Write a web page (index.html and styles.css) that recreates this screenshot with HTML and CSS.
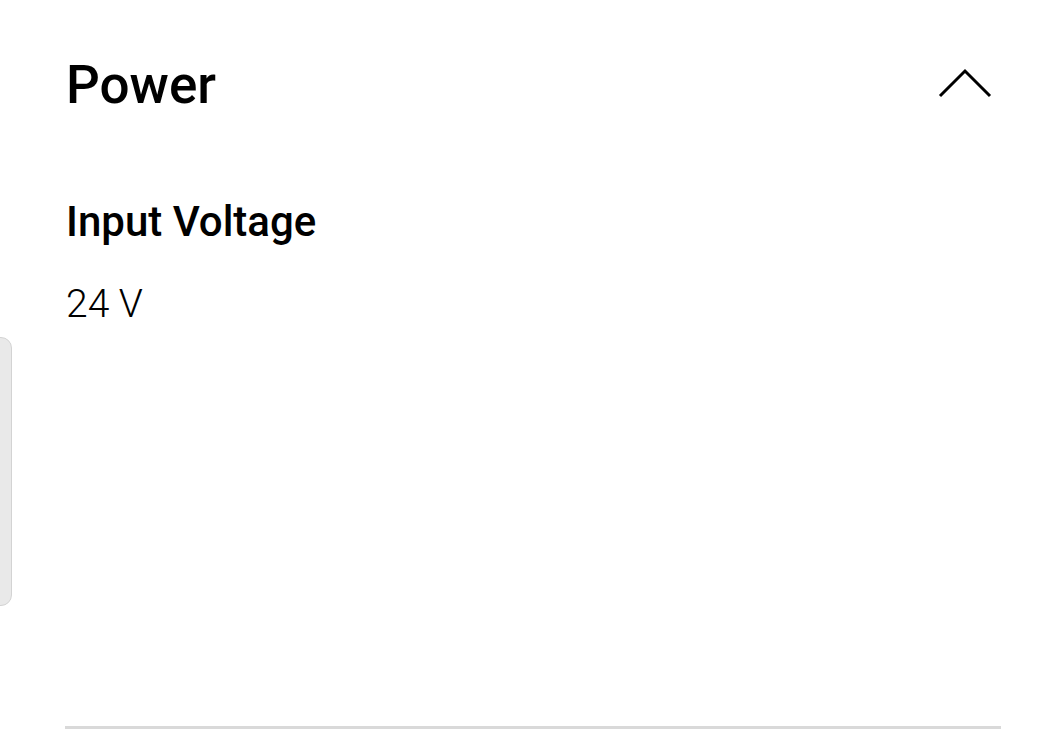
FILE: index.html
```html
<!DOCTYPE html>
<html>
<head>
<meta charset="utf-8">
<link rel="stylesheet" href="styles.css">
</head>
<body>
<div class="side-tab"></div>
<section class="panel">
  <header class="panel-head">
    <h1 class="panel-title">Power</h1>
    <svg class="chevron" width="56" height="32" viewBox="0 0 56 32"><path d="M3 29 L28 4 L53 29" fill="none" stroke="#000" stroke-width="3"/></svg>
  </header>
  <div class="spec">
    <h2 class="spec-name">Input Voltage</h2>
    <p class="spec-value">24 V</p>
  </div>
  <div class="divider"></div>
</section>
</body>
</html>
```
FILE: styles.css
```css
html, body {
  margin: 0;
  padding: 0;
  background: #fff;
  width: 1061px;
  height: 733px;
  overflow: hidden;
  font-family: Roboto, "Noto Sans", sans-serif;
  color: #000;
}
.side-tab {
  position: absolute;
  left: -12px;
  top: 337px;
  width: 22px;
  height: 267px;
  background: #e9e9e9;
  border: 1.5px solid #d3d3d3;
  border-radius: 11px;
}
.panel {
  padding: 0 60px 0 66px;
  display: flex;
  flex-direction: column;
}
.panel-head {
  display: flex;
  justify-content: space-between;
  align-items: flex-start;
  padding-top: 59px;
}
.panel-title {
  margin: 0;
  font-size: 53px;
  font-weight: 500;
  line-height: 53px;
}
.chevron {
  margin-top: 8px;
  margin-right: 8px;
}
.spec {
  margin-top: 89px;
}
.spec-name {
  margin: 0;
  font-size: 42px;
  font-weight: 500;
  line-height: 42px;
}
.spec-value {
  margin: 42px 0 0;
  font-size: 39px;
  font-weight: 300;
  line-height: 39px;
}
.divider {
  height: 3px;
  background: #d9d9d9;
  margin-top: 402px;
  margin-left: -1px;
}
```
